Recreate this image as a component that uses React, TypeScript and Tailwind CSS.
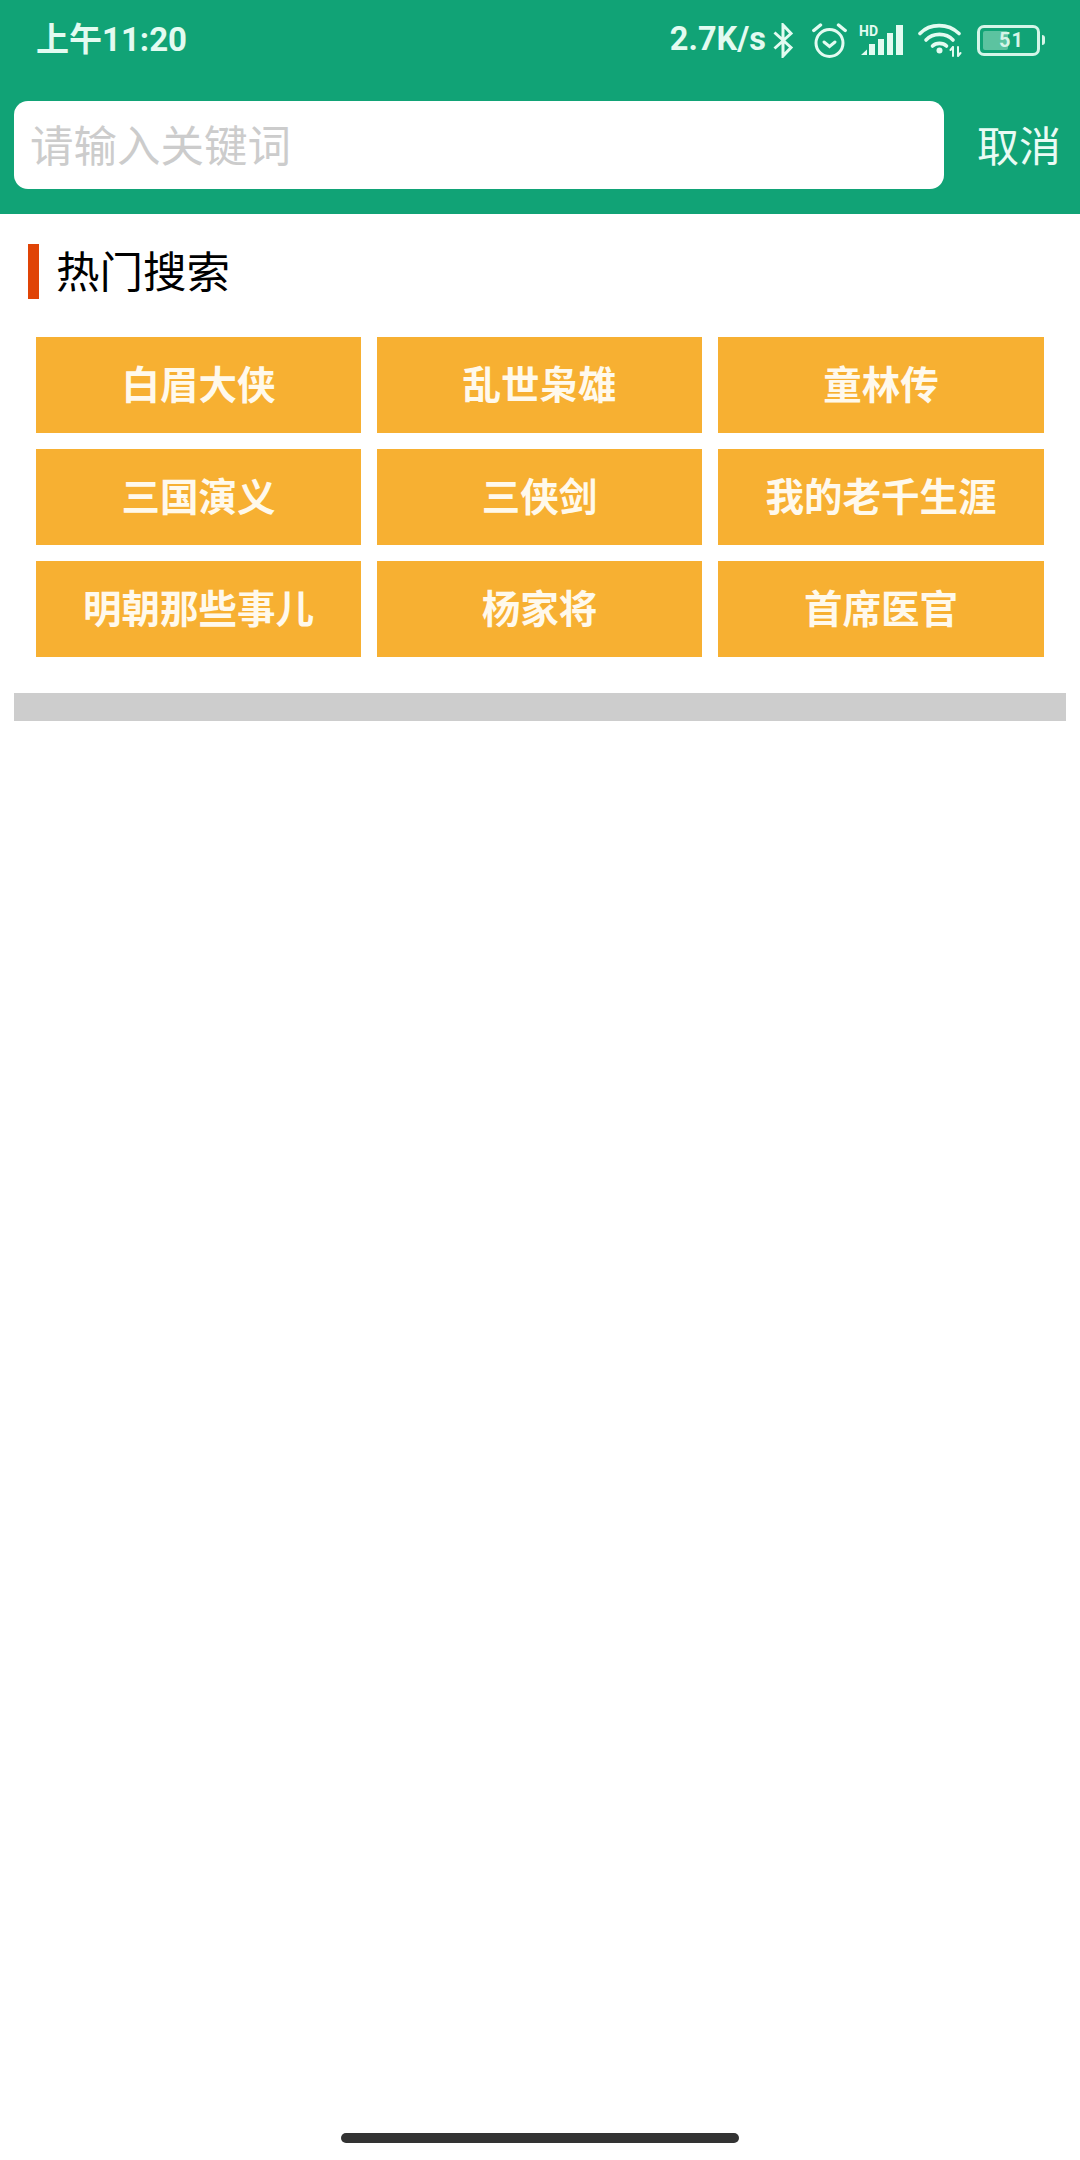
const HOT_WORDS = [
  "白眉大侠", "乱世枭雄", "童林传",
  "三国演义", "三侠剑", "我的老千生涯",
  "明朝那些事儿", "杨家将", "首席医官",
];

function Bluetooth() {
  return (
    <svg width="21" height="35" viewBox="0 0 21 35" fill="none" stroke="#e3fbf1" strokeWidth="3">
      <path d="M1.5 9.5 L18 24.5 L10 33 V2 L18 10.5 L1.5 25.5" />
    </svg>
  );
}

function Alarm() {
  return (
    <svg width="35" height="35" viewBox="0 0 35 35" fill="none" stroke="#e3fbf1" strokeWidth="3" strokeLinecap="round">
      <circle cx="17.5" cy="20" r="13.5" />
      <path d="M12 19 L17.5 23.5 L23 19" />
      <path d="M1.8 7.5 L8.5 2" strokeWidth="3.4" />
      <path d="M33.2 7.5 L26.5 2" strokeWidth="3.4" />
    </svg>
  );
}

function Signal() {
  return (
    <svg width="44" height="32" viewBox="0 0 44 32" fill="#e3fbf1">
      <text x="0" y="11.5" fontSize="14" fontWeight="700" fontFamily="Roboto, sans-serif">HD</text>
      <path d="M2 31 L8 25.5 V31 Z" />
      <rect x="10" y="20" width="6" height="11" />
      <rect x="19" y="15" width="6" height="16" />
      <rect x="28" y="9" width="6" height="22" />
      <rect x="37" y="1" width="7" height="30" />
    </svg>
  );
}

function Wifi() {
  return (
    <svg width="44" height="34" viewBox="0 0 44 34" fill="none" stroke="#e3fbf1" strokeWidth="3.6" strokeLinecap="round">
      <path d="M2 10.5 C12 0 30 0 41 10.5" />
      <path d="M8 17 C15 9.5 28 9.5 35 17" />
      <path d="M14.5 23 C18 19.5 25 19.5 28.5 23" />
      <circle cx="21.5" cy="27.5" r="3" fill="#e3fbf1" stroke="none" />
      <path d="M35 24 V33 M35 24 L32.5 27 M40 33 V24 M40 33 L42.5 30" strokeWidth="2" />
    </svg>
  );
}

function Battery() {
  return (
    <div className="flex items-center gap-[2px]">
      <div className="relative flex h-[31px] w-[63px] items-center justify-center overflow-hidden rounded-[7px] border-[3px] border-[#d5f5e8] pl-[6px]">
        <div className="absolute inset-y-[3px] left-[3px] w-[25px] rounded-[2px] bg-[#5cc3a0]" />
        <span className="relative text-[20px] font-bold leading-none tracking-[1px] text-[#d5f5e8]">51</span>
      </div>
      <div className="h-[10px] w-[3px] rounded-r-full bg-[#d5f5e8]" />
    </div>
  );
}

export default function App() {
  return (
    <div className="flex h-[2160px] w-[1080px] flex-col bg-white font-['Roboto','Noto_Sans_CJK_SC',sans-serif]">
      <header className="bg-[#11a376]">
        <div className="flex h-[80px] items-center justify-between pl-[36px] pr-[35px] text-[#e3fbf1]">
          <span className="pb-[2px] text-[33px] font-bold leading-none">上午11:20</span>
          <div className="flex items-center">
            <span className="pb-[2px] text-[32.5px] font-bold leading-none">2.7K/s</span>
            <div className="ml-[7px]"><Bluetooth /></div>
            <div className="ml-[18px]"><Alarm /></div>
            <div className="ml-[12px]"><Signal /></div>
            <div className="ml-[15px]"><Wifi /></div>
            <div className="ml-[15px]"><Battery /></div>
          </div>
        </div>
        <div className="flex items-center pb-[25px] pl-[14px] pt-[21px]">
          <div className="flex h-[88px] w-[930px] items-center rounded-[14px] bg-white pl-[16px] pt-[5px] text-[43.5px] leading-none text-[#cccccc]">
            请输入关键词
          </div>
          <span className="ml-[33px] pt-[5px] text-[42px] leading-none text-[#e9fbf4]">取消</span>
        </div>
      </header>

      <main className="flex-1">
        <div className="ml-[28px] mt-[30px] flex items-center">
          <div className="h-[55px] w-[11px] bg-[#e04406]" />
          <h1 className="ml-[17px] pt-[5px] text-[43.5px] font-normal leading-none text-black">热门搜索</h1>
        </div>
        <div className="mx-[36px] mt-[38px] grid grid-cols-[325px_325px_326px] gap-[16px]">
          {HOT_WORDS.map((word) => (
            <div key={word} className="flex h-[96px] items-center justify-center bg-[#f7b032] pt-[3px] text-[38.5px] font-bold leading-none text-[#fff9ec]">
              {word}
            </div>
          ))}
        </div>
        <div className="mx-[14px] mt-[36px] h-[28px] bg-[#cdcdcd]" />
      </main>

      <div className="mb-[17px] h-[10px] w-[398px] self-center rounded-full bg-[#333333]" />
    </div>
  );
}
